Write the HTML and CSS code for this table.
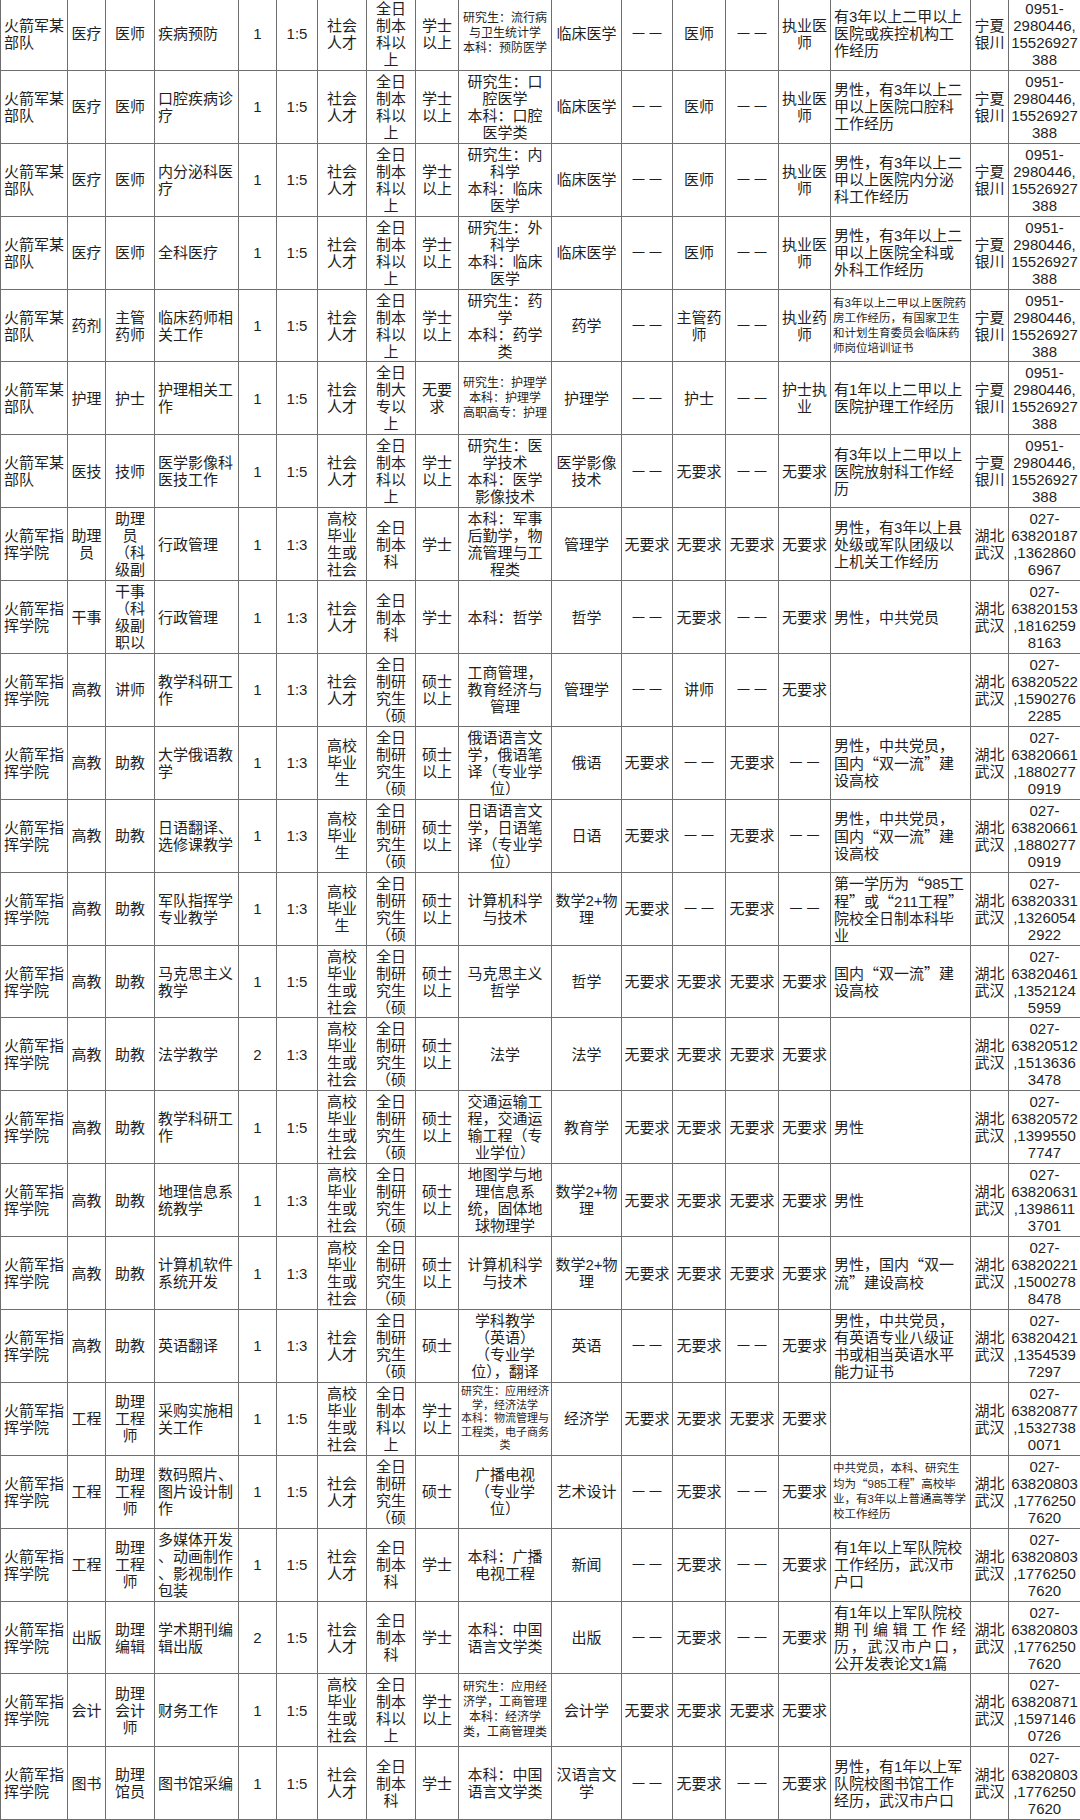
FILE: index.html
```html
<!DOCTYPE html>
<html lang="zh-CN">
<head>
<meta charset="utf-8">
<title>招聘岗位表</title>
<link rel="stylesheet" href="styles.css">
</head>
<body>
<table class="grid">
<colgroup>
<col style="width:67px"><col style="width:38px"><col style="width:49px"><col style="width:84px"><col style="width:38px"><col style="width:41px"><col style="width:49px"><col style="width:49px"><col style="width:43px"><col style="width:93px"><col style="width:70px"><col style="width:51px"><col style="width:53px"><col style="width:53px"><col style="width:52px"><col style="width:140px"><col style="width:38px"><col style="width:72px">
</colgroup>
<tbody>
<tr><td>火箭军某<br>部队</td><td>医疗</td><td>医师</td><td>疾病预防</td><td>1</td><td>1:5</td><td>社会<br>人才</td><td>全日<br>制本<br>科以<br>上</td><td>学士<br>以上</td><td class="s">研究生：流行病<br>与卫生统计学<br>本科：预防医学</td><td>临床医学</td><td class="d">——</td><td>医师</td><td class="d">——</td><td>执业医<br>师</td><td>有3年以上二甲以上<br>医院或疾控机构工<br>作经历</td><td>宁夏<br>银川</td><td>0951-<br>2980446,<br>15526927<br>388</td></tr>
<tr><td>火箭军某<br>部队</td><td>医疗</td><td>医师</td><td>口腔疾病诊<br>疗</td><td>1</td><td>1:5</td><td>社会<br>人才</td><td>全日<br>制本<br>科以<br>上</td><td>学士<br>以上</td><td>研究生：口<br>腔医学<br>本科：口腔<br>医学类</td><td>临床医学</td><td class="d">——</td><td>医师</td><td class="d">——</td><td>执业医<br>师</td><td>男性，有3年以上二<br>甲以上医院口腔科<br>工作经历</td><td>宁夏<br>银川</td><td>0951-<br>2980446,<br>15526927<br>388</td></tr>
<tr><td>火箭军某<br>部队</td><td>医疗</td><td>医师</td><td>内分泌科医<br>疗</td><td>1</td><td>1:5</td><td>社会<br>人才</td><td>全日<br>制本<br>科以<br>上</td><td>学士<br>以上</td><td>研究生：内<br>科学<br>本科：临床<br>医学</td><td>临床医学</td><td class="d">——</td><td>医师</td><td class="d">——</td><td>执业医<br>师</td><td>男性，有3年以上二<br>甲以上医院内分泌<br>科工作经历</td><td>宁夏<br>银川</td><td>0951-<br>2980446,<br>15526927<br>388</td></tr>
<tr><td>火箭军某<br>部队</td><td>医疗</td><td>医师</td><td>全科医疗</td><td>1</td><td>1:5</td><td>社会<br>人才</td><td>全日<br>制本<br>科以<br>上</td><td>学士<br>以上</td><td>研究生：外<br>科学<br>本科：临床<br>医学</td><td>临床医学</td><td class="d">——</td><td>医师</td><td class="d">——</td><td>执业医<br>师</td><td>男性，有3年以上二<br>甲以上医院全科或<br>外科工作经历</td><td>宁夏<br>银川</td><td>0951-<br>2980446,<br>15526927<br>388</td></tr>
<tr><td>火箭军某<br>部队</td><td>药剂</td><td>主管<br>药师</td><td>临床药师相<br>关工作</td><td>1</td><td>1:5</td><td>社会<br>人才</td><td>全日<br>制本<br>科以<br>上</td><td>学士<br>以上</td><td>研究生：药<br>学<br>本科：药学<br>类</td><td>药学</td><td class="d">——</td><td>主管药<br>师</td><td class="d">——</td><td>执业药<br>师</td><td class="s n">有3年以上二甲以上医院药<br>房工作经历，有国家卫生<br>和计划生育委员会临床药<br>师岗位培训证书</td><td>宁夏<br>银川</td><td>0951-<br>2980446,<br>15526927<br>388</td></tr>
<tr><td>火箭军某<br>部队</td><td>护理</td><td>护士</td><td>护理相关工<br>作</td><td>1</td><td>1:5</td><td>社会<br>人才</td><td>全日<br>制大<br>专以<br>上</td><td>无要<br>求</td><td class="s">研究生：护理学<br>本科：护理学<br>高职高专：护理</td><td>护理学</td><td class="d">——</td><td>护士</td><td class="d">——</td><td>护士执<br>业</td><td>有1年以上二甲以上<br>医院护理工作经历</td><td>宁夏<br>银川</td><td>0951-<br>2980446,<br>15526927<br>388</td></tr>
<tr><td>火箭军某<br>部队</td><td>医技</td><td>技师</td><td>医学影像科<br>医技工作</td><td>1</td><td>1:5</td><td>社会<br>人才</td><td>全日<br>制本<br>科以<br>上</td><td>学士<br>以上</td><td>研究生：医<br>学技术<br>本科：医学<br>影像技术</td><td>医学影像<br>技术</td><td class="d">——</td><td>无要求</td><td class="d">——</td><td>无要求</td><td>有3年以上二甲以上<br>医院放射科工作经<br>历</td><td>宁夏<br>银川</td><td>0951-<br>2980446,<br>15526927<br>388</td></tr>
<tr><td>火箭军指<br>挥学院</td><td>助理<br>员</td><td>助理<br>员<br>（科<br>级副</td><td>行政管理</td><td>1</td><td>1:3</td><td>高校<br>毕业<br>生或<br>社会</td><td>全日<br>制本<br>科</td><td>学士</td><td>本科：军事<br>后勤学，物<br>流管理与工<br>程类</td><td>管理学</td><td>无要求</td><td>无要求</td><td>无要求</td><td>无要求</td><td>男性，有3年以上县<br>处级或军队团级以<br>上机关工作经历</td><td>湖北<br>武汉</td><td>027-<br>63820187<br>,1362860<br>6967</td></tr>
<tr><td>火箭军指<br>挥学院</td><td>干事</td><td>干事<br>（科<br>级副<br>职以</td><td>行政管理</td><td>1</td><td>1:3</td><td>社会<br>人才</td><td>全日<br>制本<br>科</td><td>学士</td><td>本科：哲学</td><td>哲学</td><td class="d">——</td><td>无要求</td><td class="d">——</td><td>无要求</td><td>男性，中共党员</td><td>湖北<br>武汉</td><td>027-<br>63820153<br>,1816259<br>8163</td></tr>
<tr><td>火箭军指<br>挥学院</td><td>高教</td><td>讲师</td><td>教学科研工<br>作</td><td>1</td><td>1:3</td><td>社会<br>人才</td><td>全日<br>制研<br>究生<br>（硕</td><td>硕士<br>以上</td><td>工商管理，<br>教育经济与<br>管理</td><td>管理学</td><td class="d">——</td><td>讲师</td><td class="d">——</td><td>无要求</td><td></td><td>湖北<br>武汉</td><td>027-<br>63820522<br>,1590276<br>2285</td></tr>
<tr><td>火箭军指<br>挥学院</td><td>高教</td><td>助教</td><td>大学俄语教<br>学</td><td>1</td><td>1:3</td><td>高校<br>毕业<br>生</td><td>全日<br>制研<br>究生<br>（硕</td><td>硕士<br>以上</td><td>俄语语言文<br>学，俄语笔<br>译（专业学<br>位）</td><td>俄语</td><td>无要求</td><td class="d">——</td><td>无要求</td><td class="d">——</td><td>男性，中共党员，<br>国内<span class="q">“</span>双一流<span class="q">”</span>建<br>设高校</td><td>湖北<br>武汉</td><td>027-<br>63820661<br>,1880277<br>0919</td></tr>
<tr><td>火箭军指<br>挥学院</td><td>高教</td><td>助教</td><td>日语翻译、<br>选修课教学</td><td>1</td><td>1:3</td><td>高校<br>毕业<br>生</td><td>全日<br>制研<br>究生<br>（硕</td><td>硕士<br>以上</td><td>日语语言文<br>学，日语笔<br>译（专业学<br>位）</td><td>日语</td><td>无要求</td><td class="d">——</td><td>无要求</td><td class="d">——</td><td>男性，中共党员，<br>国内<span class="q">“</span>双一流<span class="q">”</span>建<br>设高校</td><td>湖北<br>武汉</td><td>027-<br>63820661<br>,1880277<br>0919</td></tr>
<tr><td>火箭军指<br>挥学院</td><td>高教</td><td>助教</td><td>军队指挥学<br>专业教学</td><td>1</td><td>1:3</td><td>高校<br>毕业<br>生</td><td>全日<br>制研<br>究生<br>（硕</td><td>硕士<br>以上</td><td>计算机科学<br>与技术</td><td>数学2+物<br>理</td><td>无要求</td><td class="d">——</td><td>无要求</td><td class="d">——</td><td>第一学历为<span class="q">“</span>985工<br>程<span class="q">”</span>或<span class="q">“</span>211工程<span class="q">”</span><br>院校全日制本科毕<br>业</td><td>湖北<br>武汉</td><td>027-<br>63820331<br>,1326054<br>2922</td></tr>
<tr><td>火箭军指<br>挥学院</td><td>高教</td><td>助教</td><td>马克思主义<br>教学</td><td>1</td><td>1:5</td><td>高校<br>毕业<br>生或<br>社会</td><td>全日<br>制研<br>究生<br>（硕</td><td>硕士<br>以上</td><td>马克思主义<br>哲学</td><td>哲学</td><td>无要求</td><td>无要求</td><td>无要求</td><td>无要求</td><td>国内<span class="q">“</span>双一流<span class="q">”</span>建<br>设高校</td><td>湖北<br>武汉</td><td>027-<br>63820461<br>,1352124<br>5959</td></tr>
<tr><td>火箭军指<br>挥学院</td><td>高教</td><td>助教</td><td>法学教学</td><td>2</td><td>1:3</td><td>高校<br>毕业<br>生或<br>社会</td><td>全日<br>制研<br>究生<br>（硕</td><td>硕士<br>以上</td><td>法学</td><td>法学</td><td>无要求</td><td>无要求</td><td>无要求</td><td>无要求</td><td></td><td>湖北<br>武汉</td><td>027-<br>63820512<br>,1513636<br>3478</td></tr>
<tr><td>火箭军指<br>挥学院</td><td>高教</td><td>助教</td><td>教学科研工<br>作</td><td>1</td><td>1:5</td><td>高校<br>毕业<br>生或<br>社会</td><td>全日<br>制研<br>究生<br>（硕</td><td>硕士<br>以上</td><td>交通运输工<br>程，交通运<br>输工程（专<br>业学位）</td><td>教育学</td><td>无要求</td><td>无要求</td><td>无要求</td><td>无要求</td><td>男性</td><td>湖北<br>武汉</td><td>027-<br>63820572<br>,1399550<br>7747</td></tr>
<tr><td>火箭军指<br>挥学院</td><td>高教</td><td>助教</td><td>地理信息系<br>统教学</td><td>1</td><td>1:3</td><td>高校<br>毕业<br>生或<br>社会</td><td>全日<br>制研<br>究生<br>（硕</td><td>硕士<br>以上</td><td>地图学与地<br>理信息系<br>统，固体地<br>球物理学</td><td>数学2+物<br>理</td><td>无要求</td><td>无要求</td><td>无要求</td><td>无要求</td><td>男性</td><td>湖北<br>武汉</td><td>027-<br>63820631<br>,1398611<br>3701</td></tr>
<tr><td>火箭军指<br>挥学院</td><td>高教</td><td>助教</td><td>计算机软件<br>系统开发</td><td>1</td><td>1:3</td><td>高校<br>毕业<br>生或<br>社会</td><td>全日<br>制研<br>究生<br>（硕</td><td>硕士<br>以上</td><td>计算机科学<br>与技术</td><td>数学2+物<br>理</td><td>无要求</td><td>无要求</td><td>无要求</td><td>无要求</td><td>男性，国内<span class="q">“</span>双一<br>流<span class="q">”</span>建设高校</td><td>湖北<br>武汉</td><td>027-<br>63820221<br>,1500278<br>8478</td></tr>
<tr><td>火箭军指<br>挥学院</td><td>高教</td><td>助教</td><td>英语翻译</td><td>1</td><td>1:3</td><td>社会<br>人才</td><td>全日<br>制研<br>究生<br>（硕</td><td>硕士</td><td>学科教学<br>（英语）<br>（专业学<br>位），翻译</td><td>英语</td><td class="d">——</td><td>无要求</td><td class="d">——</td><td>无要求</td><td>男性，中共党员，<br>有英语专业八级证<br>书或相当英语水平<br>能力证书</td><td>湖北<br>武汉</td><td>027-<br>63820421<br>,1354539<br>7297</td></tr>
<tr><td>火箭军指<br>挥学院</td><td>工程</td><td>助理<br>工程<br>师</td><td>采购实施相<br>关工作</td><td>1</td><td>1:5</td><td>高校<br>毕业<br>生或<br>社会</td><td>全日<br>制本<br>科以<br>上</td><td>学士<br>以上</td><td class="xs">研究生：应用经济<br>学，经济法学<br>本科：物流管理与<br>工程类，电子商务<br>类</td><td>经济学</td><td>无要求</td><td>无要求</td><td>无要求</td><td>无要求</td><td></td><td>湖北<br>武汉</td><td>027-<br>63820877<br>,1532738<br>0071</td></tr>
<tr><td>火箭军指<br>挥学院</td><td>工程</td><td>助理<br>工程<br>师</td><td>数码照片、<br>图片设计制<br>作</td><td>1</td><td>1:5</td><td>社会<br>人才</td><td>全日<br>制研<br>究生<br>（硕</td><td>硕士</td><td>广播电视<br>（专业学<br>位）</td><td>艺术设计</td><td class="d">——</td><td>无要求</td><td class="d">——</td><td>无要求</td><td class="s n">中共党员，本科、研究生<br>均为<span class="q">“</span>985工程<span class="q">”</span>高校毕<br>业，有3年以上普通高等学<br>校工作经历</td><td>湖北<br>武汉</td><td>027-<br>63820803<br>,1776250<br>7620</td></tr>
<tr><td>火箭军指<br>挥学院</td><td>工程</td><td>助理<br>工程<br>师</td><td>多媒体开发<br>、动画制作<br>、影视制作<br>包装</td><td>1</td><td>1:5</td><td>社会<br>人才</td><td>全日<br>制本<br>科</td><td>学士</td><td>本科：广播<br>电视工程</td><td>新闻</td><td class="d">——</td><td>无要求</td><td class="d">——</td><td>无要求</td><td>有1年以上军队院校<br>工作经历，武汉市<br>户口</td><td>湖北<br>武汉</td><td>027-<br>63820803<br>,1776250<br>7620</td></tr>
<tr><td>火箭军指<br>挥学院</td><td>出版</td><td>助理<br>编辑</td><td>学术期刊编<br>辑出版</td><td>2</td><td>1:5</td><td>社会<br>人才</td><td>全日<br>制本<br>科</td><td>学士</td><td>本科：中国<br>语言文学类</td><td>出版</td><td class="d">——</td><td>无要求</td><td class="d">——</td><td>无要求</td><td>有1年以上军队院校<br><span class="j">期刊编辑工作经</span><span class="j">历，武汉市户口，</span>公开发表论文1篇</td><td>湖北<br>武汉</td><td>027-<br>63820803<br>,1776250<br>7620</td></tr>
<tr><td>火箭军指<br>挥学院</td><td>会计</td><td>助理<br>会计<br>师</td><td>财务工作</td><td>1</td><td>1:5</td><td>高校<br>毕业<br>生或<br>社会</td><td>全日<br>制本<br>科以<br>上</td><td>学士<br>以上</td><td class="s">研究生：应用经<br>济学，工商管理<br>本科：经济学<br>类，工商管理类</td><td>会计学</td><td>无要求</td><td>无要求</td><td>无要求</td><td>无要求</td><td></td><td>湖北<br>武汉</td><td>027-<br>63820871<br>,1597146<br>0726</td></tr>
<tr><td>火箭军指<br>挥学院</td><td>图书</td><td>助理<br>馆员</td><td>图书馆采编</td><td>1</td><td>1:5</td><td>社会<br>人才</td><td>全日<br>制本<br>科</td><td>学士</td><td>本科：中国<br>语言文学类</td><td>汉语言文<br>学</td><td class="d">——</td><td>无要求</td><td class="d">——</td><td>无要求</td><td>男性，有1年以上军<br>队院校图书馆工作<br>经历，武汉市户口</td><td>湖北<br>武汉</td><td>027-<br>63820803<br>,1776250<br>7620</td></tr>
</tbody>
</table>
</body>
</html>
```

FILE: styles.css
```css
html, body {
  margin: 0;
  padding: 0;
  background: #ffffff;
}

body {
  width: 1080px;
  height: 1820px;
  overflow: hidden;
}

.grid {
  border-collapse: collapse;
  table-layout: fixed;
  width: 1080px;
  margin-top: -3px;
  font-family: "Liberation Sans", "Noto Sans CJK SC", sans-serif;
  font-size: 15px;
  line-height: 17px;
  color: #1f1f1f;
}

.grid tr {
  height: 72.9px;
}

.grid td {
  border: 1px solid #6e6e6e;
  padding: 0 2px;
  overflow: hidden;
  white-space: nowrap;
  vertical-align: middle;
  text-align: center;
}

.grid td:nth-child(1),
.grid td:nth-child(4),
.grid td:nth-child(16) {
  text-align: left;
  padding-left: 3px;
}

.grid td.s {
  font-size: 12px;
  line-height: 15px;
}

.grid td.s.n {
  font-size: 11.5px;
  padding-left: 2px;
}

.grid td.xs {
  font-size: 11px;
  line-height: 13.5px;
}

.grid td.d {
  font-size: 12px;
  letter-spacing: 5px;
  text-indent: 5px;
}

.q {
  font-family: "Noto Sans CJK SC", sans-serif;
}

.j {
  display: block;
  white-space: normal;
  text-align: justify;
  text-align-last: justify;
  padding-right: 2px;
}
```
